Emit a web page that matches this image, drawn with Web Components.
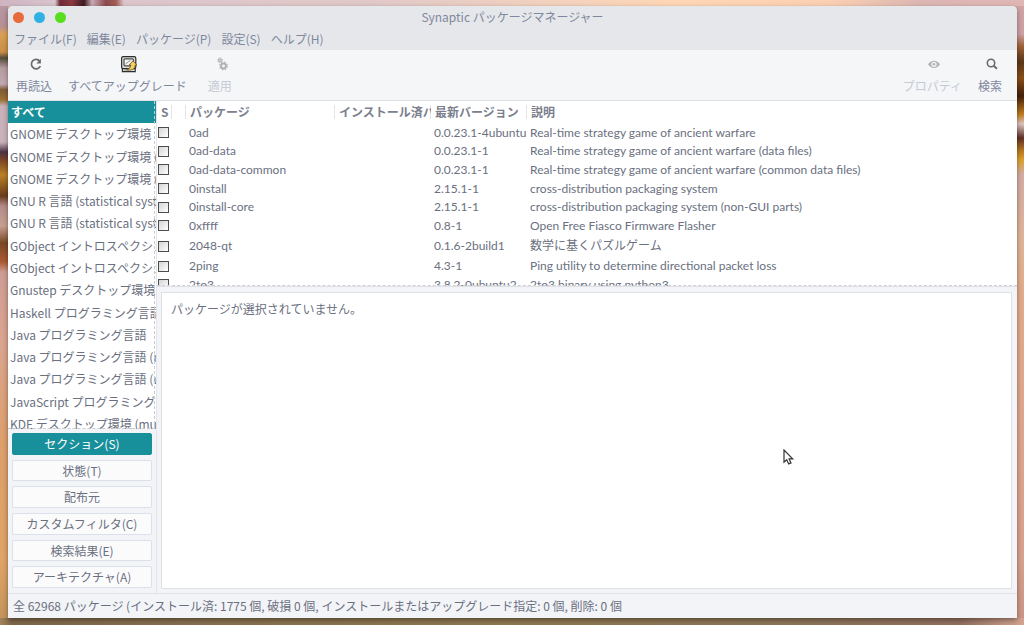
<!DOCTYPE html>
<html lang="ja">
<head>
<meta charset="utf-8">
<title>Synaptic パッケージマネージャー</title>
<style>
  body { margin: 0; font: 12px/18px "Noto Sans CJK JP", "Noto Sans", sans-serif; color: #6a7080; }
</style>
</head>
<body>
<synaptic-desktop>
  <app-window>
    <title-bar slot="header">Synaptic パッケージマネージャー</title-bar>
    <menu-bar slot="header">
      <button>ファイル(F)</button><button>編集(E)</button><button>パッケージ(P)</button><button>設定(S)</button><button>ヘルプ(H)</button>
    </menu-bar>
    <tool-bar slot="header">
      <tool-button icon="reload">再読込</tool-button>
      <tool-button icon="upgrade">すべてアップグレード</tool-button>
      <tool-button icon="gears" disabled>適用</tool-button>
      <tool-button slot="end" icon="eye" disabled>プロパティ</tool-button>
      <tool-button slot="end" icon="search">検索</tool-button>
    </tool-bar>
    <section-list slot="side"></section-list>
    <filter-group slot="side"></filter-group>
    <package-table slot="main"></package-table>
    <package-details slot="main">パッケージが選択されていません。</package-details>
    <status-bar slot="footer">全 62968 パッケージ (インストール済: 1775 個, 破損 0 個, インストールまたはアップグレード指定: 0 個, 削除: 0 個</status-bar>
  </app-window>
  <mouse-pointer></mouse-pointer>
</synaptic-desktop>

<script>
const define = (name, html, setup) => customElements.define(name, class extends HTMLElement {
  constructor() {
    super();
    this.attachShadow({ mode: 'open' }).innerHTML = html;
  }
  connectedCallback() {
    if (setup) setup(this, this.shadowRoot);
  }
});

define('synaptic-desktop', `
<style>
  :host {
    display: grid; grid-template-rows: minmax(0, 1fr); position: relative; box-sizing: border-box; height: 100vh; padding: 6px 7px 7px 8px; overflow: hidden;
    background:
      linear-gradient(90deg, #cfb4c2 0, #d8c5cc 55px, #6e2a35 60px, #8a3a40 72px, #3b1c22 84px, #c9aab5 92px, #8c4a4c 106px, #a35d58 116px, #dcc6cc 124px, #e2c9c8 380px, #ffd7b5 680px, #fbd0b2 830px, #dcb6b2 920px, #e0b6b4 100%) 0 0 / 100% 6px no-repeat,
      linear-gradient(90deg, #a58359 0, #80684a 12px, #88704f 200px, #8d7850 500px, #8c7658 780px, #92705f 960px, #d3a390 100%) 0 100% / 100% 7px no-repeat,
      linear-gradient(180deg, #b89aa6 0, #b78f96 26px, #d9a052 34px, #c98e48 52px, #524c3a 58px, #b59ca0 68px, #c2aab2 84px, #7f5a35 90px, #9a7236 100px, #c9b1b9 106px, #cbb3bb 142px, #4b3346 152px, #7c4526 160px, #b98227 175px, #6a3c1c 196px, #b48b8a 206px, #c6a08f 226px, #7b4826 243px, #ab5a34 262px, #cf9c94 272px, #d9a590 340px, #dd9f6c 440px, #e0a468 560px, #c1925a 100%) 0 0 / 8px 100% no-repeat,
      linear-gradient(180deg, #d1a5a6 0, #cda0a4 34px, #a06438 46px, #5b3618 62px, #8a4f18 78px, #44200c 96px, #c07a1c 114px, #ddc3bd 124px, #5f2f25 138px, #b57420 150px, #dda02e 160px, #d3aca2 174px, #e0b498 240px, #e2ab8a 300px, #dfa68e 420px, #d8a08e 560px, #c99483 100%) 100% 0 / 7px 100% no-repeat,
      #d8b0a0;
  }
</style>
<slot></slot>`);

define('app-window', `
<style>
  :host { display: flex; flex-direction: column; min-width: 0; background: #f3f4f7; border-radius: 5px 5px 0 0; overflow: hidden; box-shadow: 0 2px 5px #0006; }
  .body { display: grid; grid-template-columns: 149px minmax(0, 1fr); grid-template-rows: minmax(0, 1fr); flex: 1; min-height: 0; }
  aside, main { display: flex; flex-direction: column; min-width: 0; }
  aside { border-right: 1px solid #e3e5ea; }
</style>
<slot name="header"></slot>
<div class="body">
  <aside><slot name="side"></slot></aside>
  <main><slot name="main"></slot></main>
</div>
<slot name="footer"></slot>`);

define('title-bar', `
<style>
  :host { display: grid; grid-template-columns: 80px 1fr 80px; align-items: center; height: 22px; background: #e6e7eb; color: #7e879c; }
  .lights { display: flex; gap: 10px; padding-left: 5px; }
  i { width: 11px; height: 11px; border-radius: 50%; background: #e86b3c; }
  i:nth-child(2) { background: #30b1e4; }
  i:nth-child(3) { background: #57de1f; }
  .title { text-align: center; }
</style>
<div class="lights"><i></i><i></i><i></i></div>
<div class="title"><slot></slot></div>`);

define('menu-bar', `
<style>
  :host { display: flex; align-items: center; gap: 10px; height: 22px; padding-left: 6px; background: #e6e7eb; }
  ::slotted(button) { font: inherit; color: #7e879c; background: none; border: 0; padding: 0; white-space: nowrap; }
</style>
<slot></slot>`);

define('tool-bar', `
<style>
  :host { display: flex; justify-content: space-between; height: 50px; background: #f5f6f8; border-bottom: 1px solid #dfe1e6; padding-right: 7px; }
  div { display: flex; }
</style>
<div><slot></slot></div>
<div><slot name="end"></slot></div>`);

const icons = {
  reload: `<svg width="18" height="18" viewBox="0 0 18 18" fill="none" stroke="#6b6b6b" stroke-width="1.7"><path d="M12.8 6.2A4.7 4.7 0 1 0 13.4 11"/><path d="M13.9 3.8v4.6H9.4z" fill="#6b6b6b" stroke="none"/></svg>`,
  upgrade: `<svg width="18" height="18" viewBox="0 0 18 18"><rect x="1.6" y="1.6" width="14.2" height="12" rx="1.6" fill="#d9dad7" stroke="#2c2e2c" stroke-width="1.2"/><path d="M2.4 13.6h12.8v3H2.4z" fill="#e6e7e4" stroke="#2c2e2c" stroke-width="1.2"/><rect x="4" y="3.8" width="9.4" height="7" rx="1" fill="#f4f5f3" stroke="#4a4c4a" stroke-width="1.2"/><path d="M5.5 9l5-3.8M4 15.1h5" stroke="#8d908d"/><path d="M6.5 14.4c2.5-.2 4.1-1.7 4.3-4.4H9.2l3.7-4.2 4 4.2h-1.7c0 4-3.6 6.2-8.7 4.4z" fill="#f0d169" stroke="#6d5212" stroke-width=".8"/></svg>`,
  gears: `<svg width="18" height="18" viewBox="0 0 18 18" fill="none" stroke="#b3b3b3"><circle cx="10.5" cy="11" r="2.4" stroke-width="2"/><circle cx="10.5" cy="11" r="3.8" stroke-width="1.3" stroke-dasharray="1.5 1.5"/><circle cx="7" cy="5.3" r="1.4" stroke-width="1.4"/><circle cx="7" cy="5.3" r="2.5" stroke-width=".8" stroke-dasharray="1 1"/></svg>`,
  eye: `<svg width="18" height="18" viewBox="0 0 18 18"><path d="M3 9.3C5.8 4.5 12.2 4.5 15 9.3 12.2 14.1 5.8 14.1 3 9.3z" fill="#b3b3b3"/><circle cx="9" cy="9.3" r="2.6" fill="#f5f6f8"/><circle cx="9" cy="9.3" r="1.3" fill="#b3b3b3"/></svg>`,
  search: `<svg width="18" height="18" viewBox="0 0 18 18" fill="none" stroke="#6b6b6b"><circle cx="8" cy="8" r="3.7" stroke-width="1.6"/><path d="M10.7 10.7l3.2 3.1" stroke-width="2"/></svg>`
};

define('tool-button', `
<style>
  :host { display: flex; }
  button { display: flex; flex-direction: column; align-items: center; gap: 4px; min-width: 40px; padding: 5px 8px 0; font: inherit; color: #7e879c; background: none; border: 0; white-space: nowrap; }
  button:disabled { color: #c6cad4; }
  :host([icon="gears"]) { padding-left: 5px; }
  .icon { display: flex; padding-left: 4px; }
</style>
<button><span class="icon"></span><span><slot></slot></span></button>`, (host, root) => {
  root.querySelector('.icon').innerHTML = icons[host.getAttribute('icon')];
  root.querySelector('button').disabled = host.hasAttribute('disabled');
});

const sections = ['すべて', 'GNOME デスクトップ環境', 'GNOME デスクトップ環境 (', 'GNOME デスクトップ環境 (', 'GNU R 言語 (statistical syste', 'GNU R 言語 (statistical syste', 'GObject イントロスペクショ', 'GObject イントロスペクショ', 'Gnustep デスクトップ環境', 'Haskell プログラミング言語', 'Java プログラミング言語', 'Java プログラミング言語 (m', 'Java プログラミング言語 (u', 'JavaScript プログラミング言', 'KDE デスクトップ環境 (mul'];

define('section-list', `
<style>
  :host { display: block; position: relative; flex: 1; min-height: 0; overflow: hidden; background: #fff; }
  :host::after { content: ""; position: absolute; inset: 0 1px 0 0; border: 1px dashed #c9ccd2; border-width: 0 1px 1px 0; }
  ul { display: grid; grid-auto-rows: 1fr; height: 334px; margin: 0; padding: 0; list-style: none; }
  li { display: flex; align-items: center; padding-left: 2px; white-space: nowrap; overflow: hidden; }
  li:first-child { padding-left: 3px; background: #18909b; color: #fff; font-weight: bold; }
</style>
<ul>${sections.map(s => `<li>${s}</li>`).join('')}</ul>`);

define('filter-group', `
<style>
  :host { display: flex; flex-direction: column; gap: 5px; height: 155px; padding: 4px 4px 5px; }
  button { flex: 1; padding: 0; font: inherit; line-height: 18px; color: #6a7080; background: #fbfbfc; border: 1px solid #dcdfec; border-radius: 2px; }
  button[aria-pressed="true"] { background: #18909b; border-color: #18909b; color: #fff; }
</style>
${['セクション(S)', '状態(T)', '配布元', 'カスタムフィルタ(C)', '検索結果(E)', 'アーキテクチャ(A)'].map((t, i) => `<button aria-pressed="${i === 0}">${t}</button>`).join('')}`);

const packages = [
  ['0ad', '0.0.23.1-4ubuntu3', 'Real-time strategy game of ancient warfare'],
  ['0ad-data', '0.0.23.1-1', 'Real-time strategy game of ancient warfare (data files)'],
  ['0ad-data-common', '0.0.23.1-1', 'Real-time strategy game of ancient warfare (common data files)'],
  ['0install', '2.15.1-1', 'cross-distribution packaging system'],
  ['0install-core', '2.15.1-1', 'cross-distribution packaging system (non-GUI parts)'],
  ['0xffff', '0.8-1', 'Open Free Fiasco Firmware Flasher'],
  ['2048-qt', '0.1.6-2build1', '数学に基くパズルゲーム'],
  ['2ping', '4.3-1', 'Ping utility to determine directional packet loss'],
  ['2to3', '3.8.2-0ubuntu2', '2to3 binary using python3']
];

define('package-table', `
<style>
  :host { display: block; position: relative; height: 185px; overflow: hidden; background: #fff; border-bottom: 1px solid #dfe1e6; }
  :host::after { content: ""; position: absolute; inset: auto 0 0 0; border-bottom: 1px dashed #cfd1d6; }
  table { table-layout: fixed; width: 100%; border-collapse: collapse; }
  col.s { width: 15px; } col.icon { width: 14px; } col.name { width: 149px; } col.ver { width: 96px; }
  th, td { padding: 0 0 0 3px; text-align: left; white-space: nowrap; overflow: hidden; line-height: 18px; }
  td { font-family: Lato, "Noto Sans CJK JP", sans-serif; }
  th { height: 22px; padding-left: 4px; color: #7b808d; background: linear-gradient(#e1e3e7, #e1e3e7) 100% 50% / 1px 14px no-repeat; }
  th:last-child { background: none; }
  tr { height: 19px; }
  tr:nth-child(3n + 2) { height: 18px; }
  tr.cjk { height: 22px; }
  td:first-child { padding-left: 1px; }
  input { appearance: none; display: block; box-sizing: border-box; width: 11px; height: 11px; margin: 0; border: 1px solid #4c4c4c; background: linear-gradient(135deg, #d4d4d4, #fff); }
</style>
<table>
  <colgroup><col class="s"><col class="icon"><col class="name"><col class="ver"><col class="ver"><col></colgroup>
  <thead><tr><th>S</th><th></th><th>パッケージ</th><th>インストール済バ</th><th>最新バージョン</th><th>説明</th></tr></thead>
  <tbody>${packages.map(([name, version, text], i) => `
    <tr${i === 6 ? ' class="cjk"' : ''}><td><input type="checkbox" aria-labelledby="p${i}"></td><td></td><td id="p${i}">${name}</td><td></td><td>${version}</td><td>${text}</td></tr>`).join('')}
  </tbody>
</table>`);

define('package-details', `
<style>
  :host { display: block; flex: 1; margin: 5px 5px 4px 4px; padding: 7px 9px; background: #fff; border: 1px solid #dfe1e6; }
</style>
<slot></slot>`);

define('status-bar', `
<style>
  :host { display: flex; align-items: center; height: 24px; padding-left: 5px; border-top: 1px solid #dfe1e6; white-space: nowrap; overflow: hidden; }
</style>
<span><slot></slot></span>`);

define('mouse-pointer', `
<style>
  :host { position: absolute; left: 783px; top: 449px; width: 12px; height: 17px; }
  svg { display: block; }
</style>
<svg width="12" height="17" viewBox="0 0 12 17"><path d="M1 1v12.2l2.7-2.5 2 4.2 2.3-1-1.9-4h3.6z" fill="#fff" stroke="#333" stroke-width="1.2"/></svg>`);
</script>
</body>
</html>
